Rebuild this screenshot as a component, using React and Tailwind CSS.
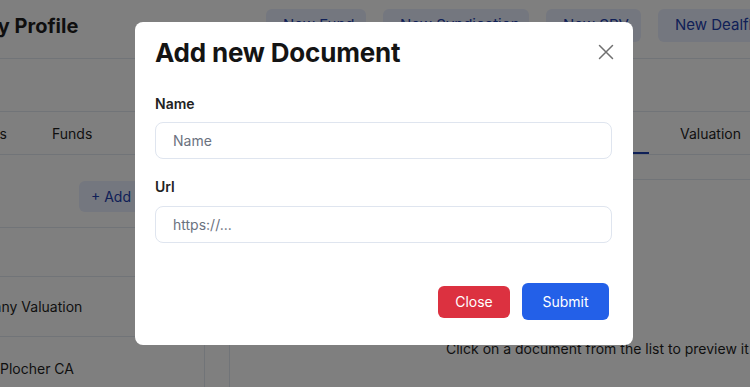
import React from "react";

function TopButton({ children, w }) {
  return (
    <div
      className={`h-[33px] ${w} shrink-0 rounded-md bg-[#e8eefe] text-[#1e40af] text-[15px] flex items-center px-[17px] whitespace-nowrap`}
    >
      {children}
    </div>
  );
}

export default function App() {
  return (
    <div
      className="relative w-[750px] h-[387px] overflow-hidden bg-white text-[#1f1f1f]"
      style={{ fontFamily: "Inter, 'Noto Sans', sans-serif" }}
    >
      {/* Background page */}
      <div className="flex flex-col">
        {/* header */}
        <div className="h-[59px] flex items-start border-b border-[#e2e8f0]">
          <div className="w-[266px] shrink-0 overflow-hidden pt-[12px]">
            <div className="ml-[-84px] text-[20px] leading-[28px] font-bold whitespace-nowrap">Company Profile</div>
          </div>
          <div className="flex gap-[17px] items-center pt-[9px]">
            <TopButton w="w-[100px]">New Fund</TopButton>
            <TopButton w="w-[146px]">New Syndication</TopButton>
            <TopButton w="w-[95px]">New SPV</TopButton>
            <TopButton w="w-[130px]">New Dealflow</TopButton>
          </div>
        </div>
        <div className="h-[53px] border-b border-[#e2e8f0]" />
        {/* tabs */}
        <div className="h-[43px] flex items-center border-b border-[#e2e8f0] text-[14px] relative">
          <div className="w-[52px] overflow-hidden">
            <div className="ml-[-60px] text-right w-[67px]">Deals</div>
          </div>
          <div>Funds</div>
          <div className="ml-auto mr-[9px] flex items-center gap-[31px] h-full">
            <div className="h-full w-[50px] border-b-2 border-[#1e40af]" />
            <div>Valuation</div>
          </div>
        </div>
        {/* body */}
        <div className="flex">
          <div className="w-[205px] shrink-0 border-r border-[#e2e8f0] flex flex-col">
            <div className="h-[73px] shrink-0 border-b border-[#e2e8f0] flex items-start pt-[26px] pl-[79px]">
              <div className="h-[31px] w-[100px] rounded-md bg-[#e8eefe] text-[#1e40af] text-[14px] flex items-center px-[12px] whitespace-nowrap">
                + Add Document
              </div>
            </div>
            <div className="h-[49px] shrink-0 border-b border-[#e2e8f0]" />
            <div className="h-[60px] shrink-0 border-b border-[#e2e8f0] flex items-center overflow-hidden text-[14px]">
              <div className="ml-[-46px] whitespace-nowrap">Company Valuation</div>
            </div>
            <div className="h-[62px] shrink-0 flex items-center overflow-hidden text-[14px]">
              <div className="whitespace-nowrap">Plocher CA</div>
            </div>
          </div>
          <div className="w-[25px] shrink-0 border-r border-[#e2e8f0]" />
          <div className="flex-1 flex flex-col">
            <div className="h-[25px] border-b border-[#e2e8f0]" />
            <div className="pt-[158px] pl-[216px] text-[14px] whitespace-nowrap">
              Click on a document from the list to preview it
            </div>
          </div>
        </div>
      </div>

      {/* Overlay */}
      <div className="absolute inset-0 bg-black/50 pl-[135px] pt-[22px]">
        <div className="w-[498px] h-[323px] bg-white rounded-lg px-[20px] pt-[14px] flex flex-col">
          <div className="flex items-center justify-between h-[32px]">
            <div className="text-[26px] font-bold text-[#141414] tracking-[-0.2px]">Add new Document</div>
            <svg width="16" height="16" viewBox="0 0 16 16" className="mr-[-1px]">
              <path d="M1.5 1.5 L14.5 14.5 M14.5 1.5 L1.5 14.5" stroke="#707070" strokeWidth="1.5" strokeLinecap="round" />
            </svg>
          </div>
          <div className="mt-[26px] text-[14px] font-semibold text-[#222] leading-[20px]">Name</div>
          <div className="mt-[8px] h-[37px] w-[457px] rounded-lg border border-[#dfe5ef] flex items-center px-[17px] text-[14px] text-[#6b7280]">
            Name
          </div>
          <div className="mt-[18px] text-[14px] font-semibold text-[#222] leading-[20px]">Url</div>
          <div className="mt-[9px] h-[37px] w-[457px] rounded-lg border border-[#dfe5ef] flex items-center px-[17px] text-[14px] text-[#6b7280]">
            https://...
          </div>
          <div className="mt-[40px] flex justify-end items-center gap-[12px] pr-[4px]">
            <div className="h-[32px] w-[72px] rounded-md bg-[#dc3140] text-white text-[14px] flex items-center justify-center">
              Close
            </div>
            <div className="h-[37px] w-[87px] rounded-md bg-[#2360e8] text-white text-[14px] flex items-center justify-center">
              Submit
            </div>
          </div>
        </div>
      </div>
    </div>
  );
}
